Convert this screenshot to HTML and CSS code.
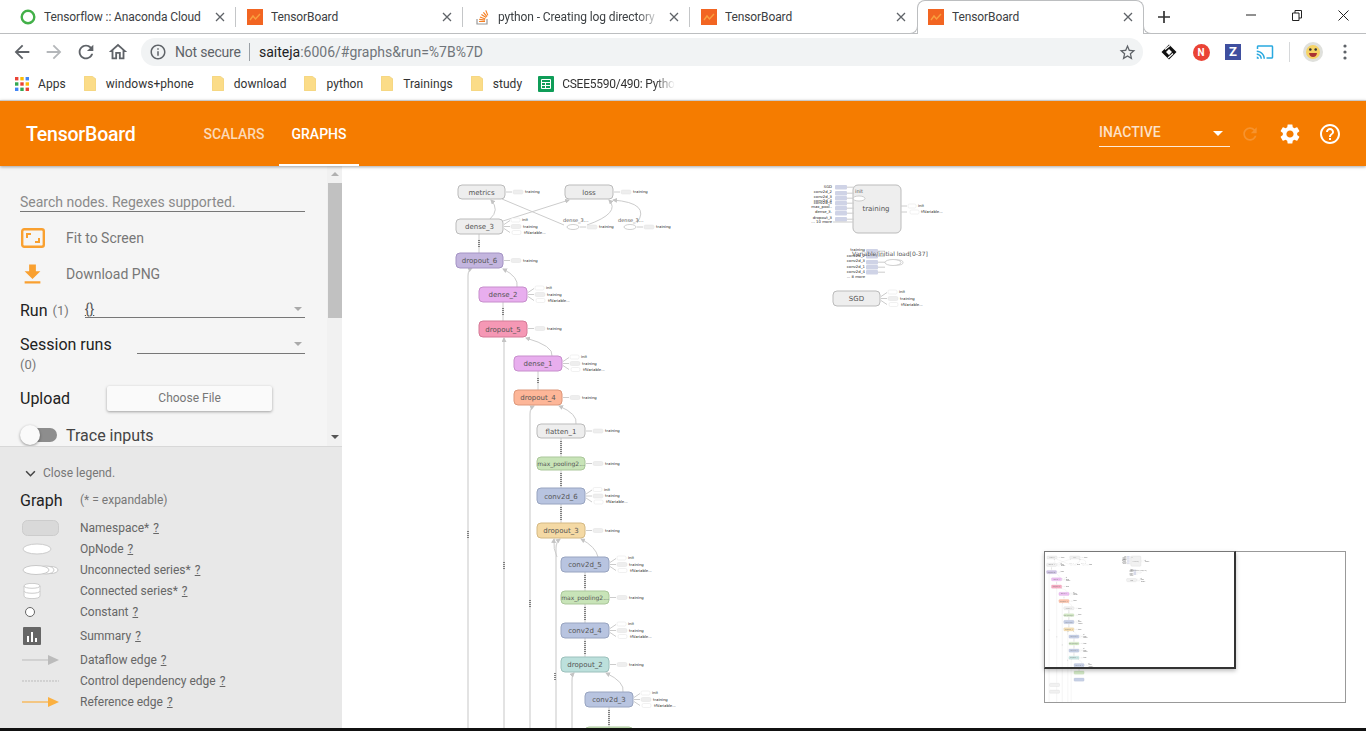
FILE: index.html
```html
<!DOCTYPE html>
<html lang="en">
<head>
    <meta charset="UTF-8">
    <meta name="viewport" content="width=device-width, initial-scale=1.0">
    <title>TensorBoard</title>
    <link rel="stylesheet" href="styles.css">
</head>
<body>

    <svg class="sprite" width="0" height="0">
        <symbol id="tb-icon" viewBox="0 0 16 16">
            <rect width="16" height="16" fill="#f26522"/>
            <path d="M3 11l3-4 2.500 3L13 5" fill="none" stroke="#f9a03f" stroke-width="1.400"/>
        </symbol>
        <symbol id="close-x" viewBox="0 0 10 10">
            <path d="M1 1l8 8M9 1l-8 8" fill="none" stroke="#5f6368" stroke-width="1.300"/>
        </symbol>
        <symbol id="folder" viewBox="0 0 12 15">
            <path d="M0 1q0-1 1-1h7l4 3v11q0 1-1 1H1q-1 0-1-1z" fill="#fbdc88" stroke="#e7c873" stroke-width=".5"/>
        </symbol>
    </svg>

    <div class="tabstrip">
        <div class="tab sep">
            <svg class="fav" viewBox="0 0 16 16"><circle cx="8" cy="8" r="6.300" fill="none" stroke="#43b049" stroke-width="2.400"/></svg>
            <span class="tab-title">Tensorflow :: Anaconda Cloud</span>
            <svg class="tab-x"><use href="#close-x"/></svg>
        </div>
        <div class="tab sep">
            <svg class="fav"><use href="#tb-icon"/></svg>
            <span class="tab-title">TensorBoard</span>
            <svg class="tab-x"><use href="#close-x"/></svg>
        </div>
        <div class="tab sep">
            <svg class="fav" viewBox="0 0 16 16">
                <path d="M3 10v5h10v-5" fill="none" stroke="#999" stroke-width="1.200"/>
                <path d="M5 12.500h6M5.200 10.300l5.800.8M6 8l5.400 2M7.400 5.600l4.800 3M9.400 3.400l3.600 4.300M11.800 1.400l2 5" fill="none" stroke="#f48024" stroke-width="1.200"/>
            </svg>
            <span class="tab-title fade">python - Creating log directory</span>
            <svg class="tab-x"><use href="#close-x"/></svg>
        </div>
        <div class="tab">
            <svg class="fav"><use href="#tb-icon"/></svg>
            <span class="tab-title">TensorBoard</span>
            <svg class="tab-x"><use href="#close-x"/></svg>
        </div>
        <div class="tab active">
            <svg class="fav"><use href="#tb-icon"/></svg>
            <span class="tab-title">TensorBoard</span>
            <svg class="tab-x"><use href="#close-x"/></svg>
        </div>
        <svg class="newtab" viewBox="0 0 12 12"><path d="M6 0v12M0 6h12" stroke="#333" stroke-width="1.700"/></svg>
        <div class="winctl">
            <div class="winbtn"><svg width="10" height="10" viewBox="0 0 10 10"><path d="M0 5h10" stroke="#222"/></svg></div>
            <div class="winbtn"><svg width="10" height="11" viewBox="0 0 10 11"><path d="M.5 3h6.500v7.500H.5zM3 3V.5h6.500V8H7" fill="none" stroke="#222"/></svg></div>
            <div class="winbtn"><svg width="11" height="11" viewBox="0 0 11 11"><path d="M.5.5l10 10M10.500.5l-10 10" stroke="#222"/></svg></div>
        </div>
    </div>

    <div class="toolbar">
        <div class="navbtn"><svg viewBox="0 0 24 24"><path fill="#5f6368" d="M20 11H7.830l5.590-5.590L12 4l-8 8 8 8 1.410-1.410L7.830 13H20v-2z"/></svg></div>
        <div class="navbtn"><svg viewBox="0 0 24 24"><path fill="#b4b7ba" d="M4 11h12.170l-5.590-5.590L12 4l8 8-8 8-1.410-1.410L16.170 13H4v-2z"/></svg></div>
        <div class="navbtn"><svg viewBox="0 0 24 24"><path fill="#5f6368" d="M17.650 6.350C16.200 4.900 14.210 4 12 4c-4.420 0-7.990 3.580-7.990 8s3.570 8 7.990 8c3.730 0 6.840-2.550 7.730-6h-2.080c-.82 2.330-3.040 4-5.650 4-3.310 0-6-2.690-6-6s2.690-6 6-6c1.660 0 3.140.69 4.220 1.780L13 11h7V4l-2.350 2.350z"/></svg></div>
        <div class="navbtn"><svg viewBox="0 0 24 24"><path fill="#5f6368" d="M12 5.690l5 4.500V18h-2v-6H9v6H7v-7.810l5-4.500M12 3L2 12h3v8h6v-6h2v6h6v-8h3L12 3z"/></svg></div>

        <div class="omnibox">
            <svg class="omni-info" viewBox="0 0 24 24"><path fill="#5f6368" d="M11 7h2v2h-2zm0 4h2v6h-2zm1-9C6.480 2 2 6.480 2 12s4.480 10 10 10 10-4.480 10-10S17.520 2 12 2zm0 18c-4.410 0-8-3.590-8-8s3.590-8 8-8 8 3.590 8 8-3.590 8-8 8z"/></svg>
            <span class="omni-secure">Not secure</span>
            <span class="omni-bar"></span>
            <span class="omni-url"><b>saiteja</b>:6006/#graphs&amp;run=%7B%7D</span>
            <svg class="omni-star" viewBox="0 0 24 24"><path fill="#5f6368" d="M22 9.240l-7.190-.62L12 2 9.190 8.630 2 9.240l5.460 4.730L5.820 21 12 17.270 18.180 21l-1.630-7.030L22 9.240zM12 15.400l-3.760 2.270 1-4.280-3.320-2.880 4.380-.38L12 6.100l1.710 4.040 4.380.38-3.320 2.880 1 4.280L12 15.400z"/></svg>
        </div>

        <div class="extensions">
            <div class="navbtn"><svg viewBox="0 0 18 18" class="ext"><path d="M9 1.500L16.500 9 9 16.500 1.500 9zM6 9l3 3 3-3-3-3z" fill="#111"/><path d="M5 6.500l5-4M8 15l5-4.500" stroke="#fff" stroke-width="1.200"/></svg></div>
            <div class="navbtn"><span class="ext-n">N</span></div>
            <div class="navbtn"><span class="ext-z">Z</span></div>
            <div class="navbtn"><svg viewBox="0 0 24 24" class="ext"><path fill="#29a9e0" d="M21 3H3c-1.100 0-2 .9-2 2v3h2V5h18v14h-7v2h7c1.100 0 2-.9 2-2V5c0-1.100-.9-2-2-2zM1 18v3h3c0-1.660-1.340-3-3-3zm0-4v2c2.760 0 5 2.240 5 5h2c0-3.870-3.130-7-7-7zm0-4v2c4.970 0 9 4.030 9 9h2c0-6.080-4.930-11-11-11z"/></svg></div>
            <span class="ext-sep"></span>
            <div class="navbtn">
                <svg viewBox="0 0 20 20" class="avatar">
                    <circle cx="10" cy="10" r="10" fill="#dfe0dc"/>
                    <circle cx="10" cy="10" r="7" fill="#f6d365"/>
                    <circle cx="7.300" cy="7.500" r="1.300" fill="#333"/><circle cx="12.700" cy="7.500" r="1.300" fill="#333"/>
                    <path d="M6 11h8q-.5 4-4 4t-4-4z" fill="#a33"/>
                </svg>
            </div>
            <div class="navbtn"><svg viewBox="0 0 4 16" class="dots-menu"><circle cx="2" cy="2" r="1.600"/><circle cx="2" cy="8" r="1.600"/><circle cx="2" cy="14" r="1.600"/></svg></div>
        </div>
    </div>

    <div class="bookmarks">
        <div class="bm">
            <svg class="bm-apps" viewBox="0 0 14 14">
                <rect width="3.400" height="3.400" fill="#ea4335"/><rect x="5.300" width="3.400" height="3.400" fill="#fbbc05"/><rect x="10.600" width="3.400" height="3.400" fill="#4285f4"/>
                <rect y="5.300" width="3.400" height="3.400" fill="#34a853"/><rect x="5.300" y="5.300" width="3.400" height="3.400" fill="#ea4335"/><rect x="10.600" y="5.300" width="3.400" height="3.400" fill="#fbbc05"/>
                <rect y="10.600" width="3.400" height="3.400" fill="#4285f4"/><rect x="5.300" y="10.600" width="3.400" height="3.400" fill="#34a853"/><rect x="10.600" y="10.600" width="3.400" height="3.400" fill="#ea4335"/>
            </svg>
            <span>Apps</span>
        </div>
        <div class="bm"><svg class="bm-folder"><use href="#folder"/></svg><span>windows+phone</span></div>
        <div class="bm"><svg class="bm-folder"><use href="#folder"/></svg><span>download</span></div>
        <div class="bm"><svg class="bm-folder"><use href="#folder"/></svg><span>python</span></div>
        <div class="bm"><svg class="bm-folder"><use href="#folder"/></svg><span>Trainings</span></div>
        <div class="bm"><svg class="bm-folder"><use href="#folder"/></svg><span>study</span></div>
        <div class="bm bm-last">
            <svg class="bm-sheet" viewBox="0 0 16 16"><rect width="16" height="16" rx="1" fill="#0f9d58"/><path d="M3.500 3.500h9v9h-9zM3.500 6.500h9M3.500 9.500h9M7.500 6.500v6" fill="none" stroke="#fff"/></svg>
            <span class="bm-fade">CSEE5590/490: Pytho</span>
        </div>
    </div>

    <header class="appbar">
        <div class="brand">TensorBoard</div>
        <nav class="appnav">
            <a class="navtab">SCALARS</a>
            <a class="navtab current">GRAPHS</a>
        </nav>
        <div class="appbar-right">
            <div class="inactive">
                <span>INACTIVE</span>
                <i class="caret"></i>
            </div>
            <svg class="bar-icon dim" viewBox="0 0 24 24"><path d="M17.650 6.350C16.200 4.900 14.210 4 12 4c-4.420 0-7.990 3.580-7.990 8s3.570 8 7.990 8c3.730 0 6.840-2.550 7.730-6h-2.080c-.82 2.330-3.040 4-5.650 4-3.310 0-6-2.690-6-6s2.690-6 6-6c1.660 0 3.140.69 4.220 1.780L13 11h7V4l-2.350 2.350z"/></svg>
            <svg class="bar-icon" viewBox="0 0 24 24"><path d="M19.140 12.940c.04-.3.06-.61.06-.94 0-.32-.02-.64-.07-.94l2.030-1.580c.18-.14.23-.41.12-.61l-1.920-3.320c-.12-.22-.37-.29-.59-.22l-2.390.96c-.5-.38-1.030-.7-1.620-.94l-.36-2.540c-.04-.24-.24-.41-.48-.41h-3.840c-.24 0-.43.17-.47.41l-.36 2.540c-.59.24-1.130.57-1.620.94l-2.390-.96c-.22-.08-.47 0-.59.22L2.740 8.870c-.12.21-.08.47.12.61l2.030 1.580c-.05.3-.09.63-.09.94s.02.64.07.94l-2.030 1.580c-.18.14-.23.41-.12.61l1.920 3.320c.12.22.37.29.59.22l2.390-.96c.5.38 1.030.7 1.620.94l.36 2.540c.05.24.24.41.48.41h3.840c.24 0 .44-.17.47-.41l.36-2.540c.59-.24 1.130-.56 1.620-.94l2.390.96c.22.08.47 0 .59-.22l1.920-3.320c.12-.22.07-.47-.12-.61l-2.010-1.580zM12 15.600c-1.980 0-3.600-1.620-3.600-3.600s1.620-3.600 3.600-3.600 3.600 1.620 3.600 3.600-1.620 3.600-3.600 3.600z"/></svg>
            <svg class="bar-icon" viewBox="0 0 24 24"><path d="M11 18h2v-2h-2v2zm1-16C6.480 2 2 6.480 2 12s4.480 10 10 10 10-4.480 10-10S17.520 2 12 2zm0 18c-4.410 0-8-3.590-8-8s3.590-8 8-8 8 3.590 8 8-3.590 8-8 8zm0-14c-2.210 0-4 1.790-4 4h2c0-1.100.9-2 2-2s2 .9 2 2c0 2-3 1.750-3 5h2c0-2.250 3-2.500 3-5 0-2.210-1.790-4-4-4z"/></svg>
        </div>
    </header>

    <div class="content">
        <aside class="sidebar">
            <div class="controls">
                <div class="controls-inner">
                    <div class="search">Search nodes. Regexes supported.</div>
                    <div class="action">
                        <svg class="action-icon" viewBox="0 0 24 20"><rect x="1.200" y="1.200" width="21.600" height="17.600" rx="2" fill="none" stroke="#f9a030" stroke-width="2.400"/><path d="M5 10V5h5v2H7v3zM19 10v5h-5v-2h3v-3z" fill="#f9a030"/></svg>
                        <span>Fit to Screen</span>
                    </div>
                    <div class="action">
                        <svg class="action-icon download" viewBox="0 0 24 24"><path fill="#f9a030" d="M19 9h-4V3H9v6H5l7 7 7-7zM5 18v2h14v-2H5z"/></svg>
                        <span>Download PNG</span>
                    </div>
                    <div class="field run">
                        <span class="field-name">Run</span><span class="field-count">(1)</span>
                        <div class="select run-select">{}<i class="select-caret"></i></div>
                    </div>
                    <div class="field session">
                        <span class="field-name">Session runs</span>
                        <div class="select session-select"><i class="select-caret"></i></div>
                    </div>
                    <div class="field-count solo">(0)</div>
                    <div class="upload">
                        <span class="field-name">Upload</span>
                        <button class="choose">Choose File</button>
                    </div>
                    <div class="trace">
                        <div class="toggle"><i class="knob"></i></div>
                        <span>Trace inputs</span>
                    </div>
                </div>
                <div class="scrollbar">
                    <i class="arrow-up"></i>
                    <div class="thumb"></div>
                    <i class="arrow-down"></i>
                </div>
            </div>

            <div class="legend">
                <div class="legend-close">
                    <svg viewBox="0 0 12 8"><path d="M1 1.500l5 5 5-5" fill="none" stroke="#444" stroke-width="1.800"/></svg>
                    <span>Close legend.</span>
                </div>
                <div class="legend-head">
                    <span class="legend-title">Graph</span>
                    <span>(* = expandable)</span>
                </div>
                <div class="legend-row">
                    <svg viewBox="0 0 38 16"><rect x=".5" y=".5" width="36" height="15" rx="5" fill="#d9d9d9" stroke="#ccc"/></svg>
                    <span>Namespace* <u>?</u></span>
                </div>
                <div class="legend-row">
                    <svg viewBox="0 0 38 16"><ellipse cx="15" cy="8" rx="14" ry="5" fill="#fff" stroke="#ccc"/></svg>
                    <span>OpNode <u>?</u></span>
                </div>
                <div class="legend-row">
                    <svg viewBox="0 0 38 16"><ellipse cx="29" cy="8" rx="7" ry="3.500" fill="#fff" stroke="#c8c8c8"/><ellipse cx="24" cy="8" rx="8" ry="4" fill="#fff" stroke="#c8c8c8"/><ellipse cx="14" cy="8" rx="13" ry="4.500" fill="#fff" stroke="#c8c8c8"/></svg>
                    <span>Unconnected series* <u>?</u></span>
                </div>
                <div class="legend-row">
                    <svg viewBox="0 0 38 16"><path d="M2 3c0-3.500 16-3.500 16 0v10c0 3.500-16 3.500-16 0z" fill="#fff" stroke="#ccc"/><path d="M2 3c0 3 16 3 16 0M2 8c0 3 16 3 16 0" fill="none" stroke="#ccc"/></svg>
                    <span>Connected series* <u>?</u></span>
                </div>
                <div class="legend-row">
                    <svg viewBox="0 0 38 16"><circle cx="8" cy="8" r="4.500" fill="#fff" stroke="#666"/></svg>
                    <span>Constant <u>?</u></span>
                </div>
                <div class="legend-row tall">
                    <svg viewBox="0 0 38 20"><rect x="1" y="1" width="18" height="18" rx="1" fill="#666"/><path d="M5 10h2v6H5zM9 6h2v10H9zM13 12h2v4h-2z" fill="#fff"/></svg>
                    <span>Summary <u>?</u></span>
                </div>
                <div class="legend-row">
                    <svg viewBox="0 0 38 16"><path d="M0 8h28" stroke="#bbb"/><path d="M26 3l11 5-11 5z" fill="#bbb"/></svg>
                    <span>Dataflow edge <u>?</u></span>
                </div>
                <div class="legend-row">
                    <svg viewBox="0 0 38 16"><path d="M0 8h37" stroke="#bbb" stroke-dasharray="2 1"/></svg>
                    <span>Control dependency edge <u>?</u></span>
                </div>
                <div class="legend-row">
                    <svg viewBox="0 0 38 16"><path d="M0 8h28" stroke="#fbb040" stroke-width="1.200"/><path d="M26 3l11 5-11 5z" fill="#fbb040"/></svg>
                    <span>Reference edge <u>?</u></span>
                </div>
            </div>
        </aside>

        <main class="board">
            <svg class="graph" width="1024" height="562" viewBox="342 166 1024 562">
                <defs>
                    <marker id="arr" markerWidth="5" markerHeight="5" refX="4" refY="2.500" orient="auto" markerUnits="userSpaceOnUse">
                        <path d="M0 0l5 2.500L0 5z" fill="#c4c4c4"/>
                    </marker>
                    <g id="aux1">
                        <path class="edge" d="M1 0h6"/>
                        <rect class="chip" x="8" y="-2" width="10" height="4" rx="1.500"/>
                        <text class="tiny" x="20" y="1.300">training</text>
                    </g>
                    <g id="aux3">
                        <path class="edge" d="M1-2l6-4M1 0h6M1 2l6 4"/>
                        <rect class="chip blank" x="8" y="-8.500" width="9" height="4" rx="1.500"/>
                        <rect class="chip" x="8" y="-2" width="10" height="4" rx="1.500"/>
                        <rect class="chip blank" x="9" y="4" width="9" height="4" rx="1.500"/>
                        <text class="tiny" x="19" y="-5.500">init</text>
                        <text class="tiny" x="20" y="1.300">training</text>
                        <text class="tiny" x="21" y="7.200">tfVariable...</text>
                    </g>
                    <g id="series">
                        <rect class="side" width="12" height="4.500" rx="1"/>
                        <path class="edge" d="M12 2.200h7"/>
                    </g>
                </defs>
                <g id="graph-body">
                    <!-- long skip edges -->
                    <path class="edge wide" d="M468 900V276q0-6 4-8" marker-end="url(#arr)"/>
                    <path class="edge wide" d="M504 900V338" marker-end="url(#arr)"/>
                    <path class="edge wide" d="M530 900V414q0-6 4-8" marker-end="url(#arr)"/>
                    <path class="edge wide" d="M556 900V548q0-6 4-9" marker-end="url(#arr)"/>
                    <path class="edge wide" d="M572 900V681q0-6 2-8" marker-end="url(#arr)"/>
                    <path class="dots" d="M468 531v8M504 562v8M530 600v8M555 673v8"/>

                    <!-- curves between blocks -->
                    <path class="edge" d="M490 219q10-9 1-19" marker-end="url(#arr)"/>
                    <path class="edge" d="M503 221L569 200" marker-end="url(#arr)"/>
                    <path class="edge" d="M502 199L564 225"/>
                    <path class="edge" d="M587 225q34-12 22-25" marker-end="url(#arr)"/>
                    <path class="edge" d="M637 223q14-20-24-23" marker-end="url(#arr)"/>
                    <path class="edge" d="M517 287q2-10-14-18" marker-end="url(#arr)"/>
                    <path class="edge" d="M552 356q2-10-26-18" marker-end="url(#arr)"/>
                    <path class="edge" d="M576 424q2-10-17-18" marker-end="url(#arr)"/>
                    <path class="edge" d="M598 557q-2-10-17-18" marker-end="url(#arr)"/>
                    <path class="edge" d="M557 557q-4-8-3-18" marker-end="url(#arr)"/>
                    <path class="edge" d="M623 692q2-10-17-19" marker-end="url(#arr)"/>

                    <!-- links inside the chain, with their dark tensor dashes -->
                    <path class="edge" d="M479 234v19M503 302v19M538 371v19M561 438v19M561 470v18M561 504v19M585 572v19M585 604v19M585 638v19M609 707v20"/>
                    <path class="dots" d="M479 240v8M503 308v8M538 378v6M561 441v14M561 473v13M561 507v14M585 575v14M585 607v14M585 641v14M609 710v15"/>

                    <!-- top row -->
                    <rect class="node grey" x="458" y="185" width="47" height="14" rx="4"/>
                    <text class="lbl" x="481.500" y="194.500">metrics</text>
                    <use href="#aux1" x="505" y="192"/>
                    <rect class="node grey" x="565" y="185" width="48" height="14" rx="4"/>
                    <text class="lbl" x="589" y="194.500">loss</text>
                    <use href="#aux1" x="613" y="192"/>
                    <ellipse class="op" cx="573" cy="227" rx="6" ry="2.500"/>
                    <text class="tiny-lbl" x="563" y="222">dense_3...</text>
                    <use href="#aux1" x="579" y="227"/>
                    <ellipse class="op" cx="630" cy="227" rx="6" ry="2.500"/>
                    <text class="tiny-lbl" x="618" y="222">dense_3...</text>
                    <use href="#aux1" x="636" y="227"/>

                    <!-- main chain -->
                    <rect class="node grey" x="456" y="219" width="47" height="15" rx="4"/>
                    <text class="lbl" x="479.500" y="229">dense_3</text>
                    <use href="#aux3" x="503" y="226.500"/>

                    <rect class="node purple" x="456" y="253" width="47" height="15" rx="4"/>
                    <text class="lbl" x="479.500" y="263">dropout_6</text>
                    <use href="#aux1" x="503" y="260.500"/>

                    <rect class="node pink" x="479" y="287" width="48" height="15" rx="4"/>
                    <text class="lbl" x="503" y="297">dense_2</text>
                    <use href="#aux3" x="527" y="294.500"/>

                    <rect class="node rose" x="479" y="321" width="48" height="16" rx="4"/>
                    <text class="lbl" x="503" y="331.500">dropout_5</text>
                    <use href="#aux1" x="527" y="328.500"/>

                    <rect class="node pink" x="514" y="356" width="48" height="15" rx="4"/>
                    <text class="lbl" x="538" y="366">dense_1</text>
                    <use href="#aux3" x="562" y="363.500"/>

                    <rect class="node salmon" x="514" y="390" width="48" height="15" rx="4"/>
                    <text class="lbl" x="538" y="400">dropout_4</text>
                    <use href="#aux1" x="562" y="397.500"/>

                    <rect class="node grey" x="537" y="424" width="48" height="14" rx="4"/>
                    <text class="lbl" x="561" y="433.500">flatten_1</text>
                    <use href="#aux1" x="585" y="431"/>

                    <rect class="node green" x="537" y="457" width="48" height="13" rx="4"/>
                    <text class="lbl small" x="561" y="466">max_pooling2...</text>
                    <use href="#aux1" x="585" y="463.500"/>

                    <rect class="node blue" x="537" y="488" width="48" height="16" rx="4"/>
                    <text class="lbl" x="561" y="498.500">conv2d_6</text>
                    <use href="#aux3" x="585" y="496"/>

                    <rect class="node sand" x="537" y="523" width="48" height="15" rx="4"/>
                    <text class="lbl" x="561" y="533">dropout_3</text>
                    <use href="#aux1" x="585" y="530.500"/>

                    <rect class="node blue" x="561" y="557" width="48" height="15" rx="4"/>
                    <text class="lbl" x="585" y="567">conv2d_5</text>
                    <use href="#aux3" x="609" y="564.500"/>

                    <rect class="node green" x="561" y="591" width="48" height="13" rx="4"/>
                    <text class="lbl small" x="585" y="600">max_pooling2...</text>
                    <use href="#aux1" x="609" y="597.500"/>

                    <rect class="node blue" x="561" y="623" width="48" height="15" rx="4"/>
                    <text class="lbl" x="585" y="633">conv2d_4</text>
                    <use href="#aux3" x="609" y="630.500"/>

                    <rect class="node teal" x="561" y="657" width="48" height="15" rx="4"/>
                    <text class="lbl" x="585" y="667">dropout_2</text>
                    <use href="#aux1" x="609" y="664.500"/>

                    <rect class="node blue" x="585" y="692" width="48" height="15" rx="4"/>
                    <text class="lbl" x="609" y="702">conv2d_3</text>
                    <use href="#aux3" x="633" y="699.500"/>

                    <rect class="node green" x="585" y="727" width="48" height="15" rx="4"/>
                    <rect class="node blue" x="585" y="760" width="48" height="15" rx="4"/>
                    <rect class="node grey" x="470" y="785" width="47" height="15" rx="4"/>
                    <rect class="node grey" x="470" y="817" width="47" height="15" rx="4"/>

                    <!-- training namespace -->
                    <rect class="node grey" x="853" y="185" width="48" height="48" rx="5"/>
                    <text class="lbl" x="876" y="211">training</text>
                    <text class="tiny-lbl" x="855" y="193">init</text>
                    <ellipse class="op" cx="859" cy="198.500" rx="6" ry="2.500"/>
                    <text class="tiny end" x="832" y="188">SGD</text>
                    <text class="tiny end" x="832" y="193">conv2d_2</text>
                    <text class="tiny end" x="832" y="198">conv2d_3</text>
                    <text class="tiny end" x="832" y="202">conv2d_4</text>
                    <text class="tiny end" x="832" y="204">conv2d_5</text>
                    <text class="tiny end" x="832" y="208">max_pool..</text>
                    <text class="tiny end" x="832" y="213">dense_3.</text>
                    <text class="tiny end" x="832" y="219">dropout_3</text>
                    <text class="tiny end" x="832" y="223">... 10 more</text>
                    <use href="#series" x="835" y="185"/>
                    <use href="#series" x="835" y="191"/>
                    <use href="#series" x="835" y="196"/>
                    <use href="#series" x="835" y="201"/>
                    <use href="#series" x="835" y="206"/>
                    <use href="#series" x="835" y="211"/>
                    <use href="#series" x="835" y="217"/>
                    <path class="edge" d="M833 222h20"/>
                    <path class="edge" d="M901 206h6M901 212h6"/>
                    <rect class="chip blank" x="908" y="204" width="8" height="4" rx="1.500"/>
                    <rect class="chip blank" x="910" y="210" width="9" height="4" rx="1.500"/>
                    <text class="tiny" x="918" y="207">init</text>
                    <text class="tiny" x="921" y="213">tfVariable...</text>

                    <!-- variable initializer -->
                    <text class="tiny end" x="865" y="251">training</text>
                    <text class="tiny end" x="865" y="257">conv2d_2</text>
                    <text class="tiny end" x="865" y="262">conv2d_3</text>
                    <text class="tiny end" x="865" y="268">conv2d_1</text>
                    <text class="tiny end" x="865" y="273">conv2d_4</text>
                    <text class="tiny end" x="865" y="278">... 8 more</text>
                    <use href="#series" x="866" y="249"/>
                    <use href="#series" x="866" y="254"/>
                    <use href="#series" x="866" y="260"/>
                    <use href="#series" x="866" y="265"/>
                    <use href="#series" x="866" y="270"/>
                    <ellipse class="op" cx="898" cy="262.500" rx="5" ry="2.500"/>
                    <ellipse class="op" cx="893" cy="262.500" rx="8" ry="3"/>
                    <text class="mid" x="852" y="255.500">Variable/initial load[0-37]</text>

                    <!-- SGD -->
                    <rect class="node grey" x="833" y="291" width="47" height="15" rx="4"/>
                    <text class="lbl" x="856.500" y="301">SGD</text>
                    <use href="#aux3" x="880" y="298.500"/>
                </g>
            </svg>

            <div class="minimap">
                <svg width="300" height="150" viewBox="453 166 1405 707">
                    <use href="#graph-body"/>
                </svg>
                <div class="viewport"></div>
            </div>
        </main>
    </div>
    <div class="taskbar"></div>

</body>
</html>
```

FILE: styles.css
```css
* {
    box-sizing: border-box;
}
html, body {
    margin: 0;
    height: 100%;
    overflow: hidden;
}
body {
    display: flex;
    flex-direction: column;
    background: #fff;
    font-family: Roboto, "Liberation Sans", sans-serif;
}
.sprite {
    position: absolute;
}

/* browser chrome */
.tabstrip {
    display: flex;
    align-items: stretch;
    height: 34px;
    padding-left: 9px;
    background: #fff;
    border-bottom: 1px solid #bcbec0;
}
.tab {
    position: relative;
    display: flex;
    align-items: center;
    width: 227px;
    height: 33px;
    padding: 0 8px 0 11px;
    font-size: 12px;
    letter-spacing: -.1px;
    color: #3c4043;
}
.tab.sep {
    background: linear-gradient(#c4c6c8, #c4c6c8) right 7px / 1px 20px no-repeat;
}
.tab.active {
    height: 34px;
    background: #fff;
    border: 1px solid #bcbec0;
    border-bottom: 0;
    border-radius: 8px 8px 0 0;
    padding: 0 7px 1px 10px;
}
.tab.active::before,
.tab.active::after {
    content: "";
    position: absolute;
    bottom: 0;
    width: 8px;
    height: 8px;
    background: #fff;
    border-bottom: 1px solid #bcbec0;
}
.tab.active::before {
    left: -9px;
    border-right: 1px solid #bcbec0;
    border-bottom-right-radius: 8px;
}
.tab.active::after {
    right: -9px;
    border-left: 1px solid #bcbec0;
    border-bottom-left-radius: 8px;
}
.fav {
    width: 16px;
    height: 16px;
    flex: none;
}
.tab-title {
    flex: 1;
    margin-left: 8px;
    white-space: nowrap;
    overflow: hidden;
}
.tab-title.fade {
    -webkit-mask-image: linear-gradient(to right, #000 85%, transparent);
    mask-image: linear-gradient(to right, #000 85%, transparent);
}
.tab-x {
    width: 10px;
    height: 10px;
    flex: none;
    margin: 0 3px 0 8px;
}
.newtab {
    width: 12px;
    height: 12px;
    margin: 11px 0 0 14px;
}
.winctl {
    display: flex;
    margin-left: auto;
}
.winbtn {
    width: 46px;
    height: 30px;
    display: flex;
    align-items: center;
    justify-content: center;
}

.toolbar {
    display: flex;
    align-items: center;
    height: 33px;
    padding-left: 6px;
    padding-top: 3px;
    background: #fff;
}
.navbtn {
    width: 32px;
    height: 28px;
    display: flex;
    align-items: center;
    justify-content: center;
}
.navbtn svg {
    width: 22px;
    height: 22px;
}
.omnibox {
    display: flex;
    align-items: center;
    width: 1002px;
    height: 28px;
    margin-left: 7px;
    padding-left: 8px;
    background: #f1f3f4;
    border-radius: 14px;
    font-size: 14px;
    color: #5f6368;
}
.omni-info {
    width: 18px;
    height: 18px;
}
.omni-secure {
    margin-left: 8px;
    width: 67px;
    white-space: nowrap;
    letter-spacing: -.2px;
}
.omni-bar {
    width: 1px;
    height: 18px;
    margin: 0 9px 0 7px;
    background: #9aa0a6;
}
.omni-url {
    font-size: 14px;
    color: #70757a;
}
.omni-url b {
    font-weight: 400;
    color: #202124;
}
.omni-star {
    width: 19px;
    height: 19px;
    margin-left: auto;
    margin-right: 6px;
}
.extensions {
    display: flex;
    align-items: center;
    margin-left: 10px;
}
.navbtn svg.ext {
    width: 18px;
    height: 18px;
}
.ext-n {
    width: 17px;
    height: 17px;
    border-radius: 50%;
    background: #ea4335;
    color: #fff;
    font-size: 10px;
    font-weight: 700;
    text-align: center;
    line-height: 17px;
}
.ext-z {
    width: 16px;
    height: 16px;
    background: #3f4f9f;
    color: #fff;
    font-size: 13px;
    font-weight: 700;
    text-align: center;
    line-height: 16px;
}
.ext-sep {
    width: 1px;
    height: 20px;
    margin: 0 7px 0 8px;
    background: #d6d8da;
}
.navbtn svg.avatar {
    width: 20px;
    height: 20px;
}
.navbtn svg.dots-menu {
    width: 4px;
    height: 16px;
    fill: #5f6368;
}

.bookmarks {
    display: flex;
    align-items: center;
    gap: 18px;
    height: 33px;
    padding-left: 15px;
    background: #fff;
    font-size: 12px;
    letter-spacing: .05px;
    color: #333;
}
.bm {
    display: flex;
    align-items: center;
    gap: 10px;
    white-space: nowrap;
}
.bm-apps {
    width: 14px;
    height: 14px;
    margin-right: -1px;
}
.bm-folder {
    width: 12px;
    height: 15px;
}
.bm-sheet {
    width: 16px;
    height: 16px;
}
.bm-last {
    margin-left: -2px;
    gap: 8px;
}
.bm-fade {
    letter-spacing: -.25px;
    -webkit-mask-image: linear-gradient(to right, #000 82%, transparent);
    mask-image: linear-gradient(to right, #000 82%, transparent);
}

/* tensorboard header */
.appbar {
    display: flex;
    align-items: stretch;
    height: 66px;
    flex: none;
    background: #f57c00;
    border-top: 1px solid #c9c9c9;
    box-shadow: 0 1px 3px rgba(0, 0, 0, .35);
    position: relative;
    z-index: 2;
    color: #fff;
}
.brand {
    width: 177px;
    padding-left: 26px;
    font-size: 19.500px;
    font-weight: 500;
    line-height: 67px;
    letter-spacing: -.2px;
}
.appnav {
    display: flex;
}
.navtab {
    width: 80px;
    font-size: 14px;
    font-weight: 500;
    line-height: 67px;
    text-align: center;
    color: rgba(255, 255, 255, .72);
}
.navtab:first-child {
    width: 78px;
    margin-left: 18px;
}
.navtab.current {
    margin-left: 6px;
    color: #fff;
    border-bottom: 2px solid #fff;
}
.appbar-right {
    display: flex;
    align-items: center;
    margin-left: auto;
    padding-right: 24px;
}
.inactive {
    position: relative;
    width: 131px;
    height: 26px;
    margin-top: 0;
    padding-top: 2px;
    font-size: 14px;
    font-weight: 500;
    color: rgba(255, 255, 255, .78);
    line-height: 18px;
    border-bottom: 1px solid rgba(255, 255, 255, .85);
}
.caret {
    position: absolute;
    right: 7px;
    top: 10px;
    border: 5px solid transparent;
    border-top-color: #fff;
    border-bottom: 0;
}
.bar-icon {
    width: 24px;
    height: 24px;
    margin-left: 16px;
    fill: #fff;
}
.bar-icon.dim {
    width: 20px;
    height: 20px;
    margin-left: 10px;
    margin-right: 2px;
    fill: rgba(255, 255, 255, .18);
}

/* main area */
.content {
    flex: 1;
    display: flex;
    min-height: 0;
}
.taskbar {
    height: 3px;
    flex: none;
    background: #111;
}
.sidebar {
    width: 342px;
    flex: none;
    display: flex;
    flex-direction: column;
}
.controls {
    display: flex;
    height: 281px;
    flex: none;
    background: #f5f5f5;
    border-bottom: 1px solid #d8d8d8;
    overflow: hidden;
}
.controls-inner {
    width: 327px;
    padding: 26px 22px 0 20px;
    color: #666;
    font-size: 14px;
}
.search {
    height: 20px;
    font-size: 14px;
    line-height: 20px;
    color: #8a8a8a;
    border-bottom: 1px solid #777;
}
.action {
    display: flex;
    align-items: center;
    height: 20px;
    margin-top: 16px;
    color: #777;
}
.action span {
    margin-left: 21px;
}
.action-icon {
    width: 24px;
    height: 20px;
    margin-left: 1px;
    flex: none;
}
.action-icon.download {
    width: 27px;
    height: 27px;
    margin: -4px -1px -4px -1px;
}
.field {
    display: flex;
    align-items: flex-end;
    height: 19px;
    margin-top: 16px;
}
.field.run {
    height: 18px;
    align-items: flex-start;
}
.field.run .field-name,
.field.run .field-count {
    margin-top: 1px;
}
.field.session {
    margin-top: 17px;
}
.field-name {
    font-size: 16px;
    color: #222;
    line-height: 19px;
}
.field-count {
    margin-left: 5px;
    font-size: 13px;
    color: #777;
    line-height: 19px;
}
.field-count.solo {
    margin: 2px 0 0;
    height: 18px;
    line-height: 18px;
}
.select {
    position: relative;
    border-bottom: 1px solid #777;
    height: 19px;
    flex: 1;
}
.run-select {
    height: 18px;
    margin-left: 16px;
    font-size: 14px;
    color: #555;
    text-decoration: underline;
    line-height: 18px;
}
.session-select {
    margin-left: 25px;
}
.select-caret {
    position: absolute;
    right: 3px;
    top: 7px;
    border: 4px solid transparent;
    border-top-color: #aaa;
    border-bottom: 0;
}
.upload {
    display: flex;
    align-items: center;
    height: 25px;
    margin-top: 12px;
}
.choose {
    width: 165px;
    height: 25px;
    margin-left: 37px;
    padding-bottom: 3px;
    background: #fafafa;
    border: 0;
    border-radius: 2px;
    box-shadow: 0 1px 3px rgba(0, 0, 0, .35);
    font-family: inherit;
    font-size: 12px;
    color: #777;
}
.trace {
    display: flex;
    align-items: center;
    height: 20px;
    margin-top: 14px;
    font-size: 16px;
    color: #444;
}
.trace span {
    margin-left: 9px;
}
.toggle {
    position: relative;
    width: 36px;
    height: 14px;
    margin-left: 1px;
    border-radius: 7px;
    background: #8d8d8d;
}
.knob {
    position: absolute;
    left: -1px;
    top: -3px;
    width: 20px;
    height: 20px;
    border-radius: 50%;
    background: #fafafa;
    box-shadow: 0 1px 3px rgba(0, 0, 0, .4);
}
.scrollbar {
    width: 15px;
    display: flex;
    flex-direction: column;
    align-items: center;
    background: #f1f1f1;
}
.thumb {
    width: 14px;
    height: 135px;
    margin-top: 7px;
    background: #c1c1c1;
}
.arrow-up {
    margin-top: 6px;
    border: 4px solid transparent;
    border-bottom-color: #b0b0b0;
    border-top: 0;
}
.arrow-down {
    margin-top: auto;
    margin-bottom: 7px;
    border: 4px solid transparent;
    border-top-color: #555;
    border-bottom: 0;
}

.legend {
    flex: 1;
    padding: 16px 0 0 20px;
    background: #e8e8e8;
    font-size: 12px;
    color: #666;
}
.legend-close {
    display: flex;
    align-items: center;
    height: 20px;
    color: #777;
}
.legend-close svg {
    width: 11px;
    height: 7px;
    margin-left: 5px;
    margin-right: 7px;
}
.legend-head {
    display: flex;
    align-items: center;
    height: 26px;
    margin-top: 4px;
    margin-bottom: 4px;
    color: #777;
}
.legend-title {
    width: 60px;
    font-size: 16px;
    color: #222;
}
.legend-row {
    display: flex;
    align-items: center;
    height: 21px;
    padding-left: 2px;
}
.legend-row.tall {
    height: 27px;
}
.legend-row svg {
    width: 38px;
    height: 16px;
    margin-right: 20px;
    flex: none;
}
.legend-row.tall svg {
    height: 20px;
}
.legend-row u {
    margin-left: 1px;
}

/* graph canvas */
.board {
    position: relative;
    flex: 1;
    background: #fff;
    overflow: hidden;
}
.graph {
    display: block;
}
.edge {
    fill: none;
    stroke: #ccc;
    stroke-width: 1;
}
.edge.wide {
    stroke: #d4d4d4;
    stroke-width: 1.300;
}
.dots {
    fill: none;
    stroke: #666;
    stroke-width: 1.600;
    stroke-dasharray: 1 1;
}
.node {
    stroke-width: 1;
}
.grey { fill: #eee; stroke: #bbb; }
.purple { fill: #c3b5de; stroke: #a493c4; }
.pink { fill: #e8aeee; stroke: #c78ecc; }
.rose { fill: #f598b5; stroke: #d57a97; }
.salmon { fill: #fdb698; stroke: #dd977a; }
.green { fill: #c8e4b8; stroke: #abc79b; }
.blue { fill: #b8c4e0; stroke: #98a4c0; }
.sand { fill: #f4d9a4; stroke: #d4b984; }
.teal { fill: #bce0dc; stroke: #9cc0bc; }
.lbl, .tiny, .tiny-lbl, .mid {
    font-family: "DejaVu Sans", sans-serif;
}
.lbl {
    font-size: 7px;
    fill: #555;
    text-anchor: middle;
}
.lbl.small {
    font-size: 6px;
}
.tiny {
    font-size: 3.800px;
    fill: #222;
}
.tiny.end {
    text-anchor: end;
}
.tiny-lbl {
    font-size: 5px;
    fill: #555;
}
.mid {
    font-size: 6px;
    fill: #555;
}
.chip {
    fill: #eee;
    stroke: #e2e2e2;
    stroke-width: .5;
}
.chip.blank {
    fill: #fff;
}
.side {
    fill: #cfd3e6;
}
.op {
    fill: #fff;
    stroke: #bbb;
    stroke-width: .7;
}

/* minimap over the graph */
.minimap {
    position: absolute;
    left: 702px;
    top: 385px;
    width: 302px;
    height: 152px;
    background: #fff;
    border: 1px solid #999;
}
.minimap svg {
    display: block;
    opacity: .8;
}
.viewport {
    position: absolute;
    left: -1px;
    top: -1px;
    width: 192px;
    height: 118px;
    border: solid #333;
    border-color: #777 #333 #333 #777;
    border-width: 1px 2px 2px 1px;
    box-shadow: 0 2px 4px rgba(0, 0, 0, .25);
}
```
